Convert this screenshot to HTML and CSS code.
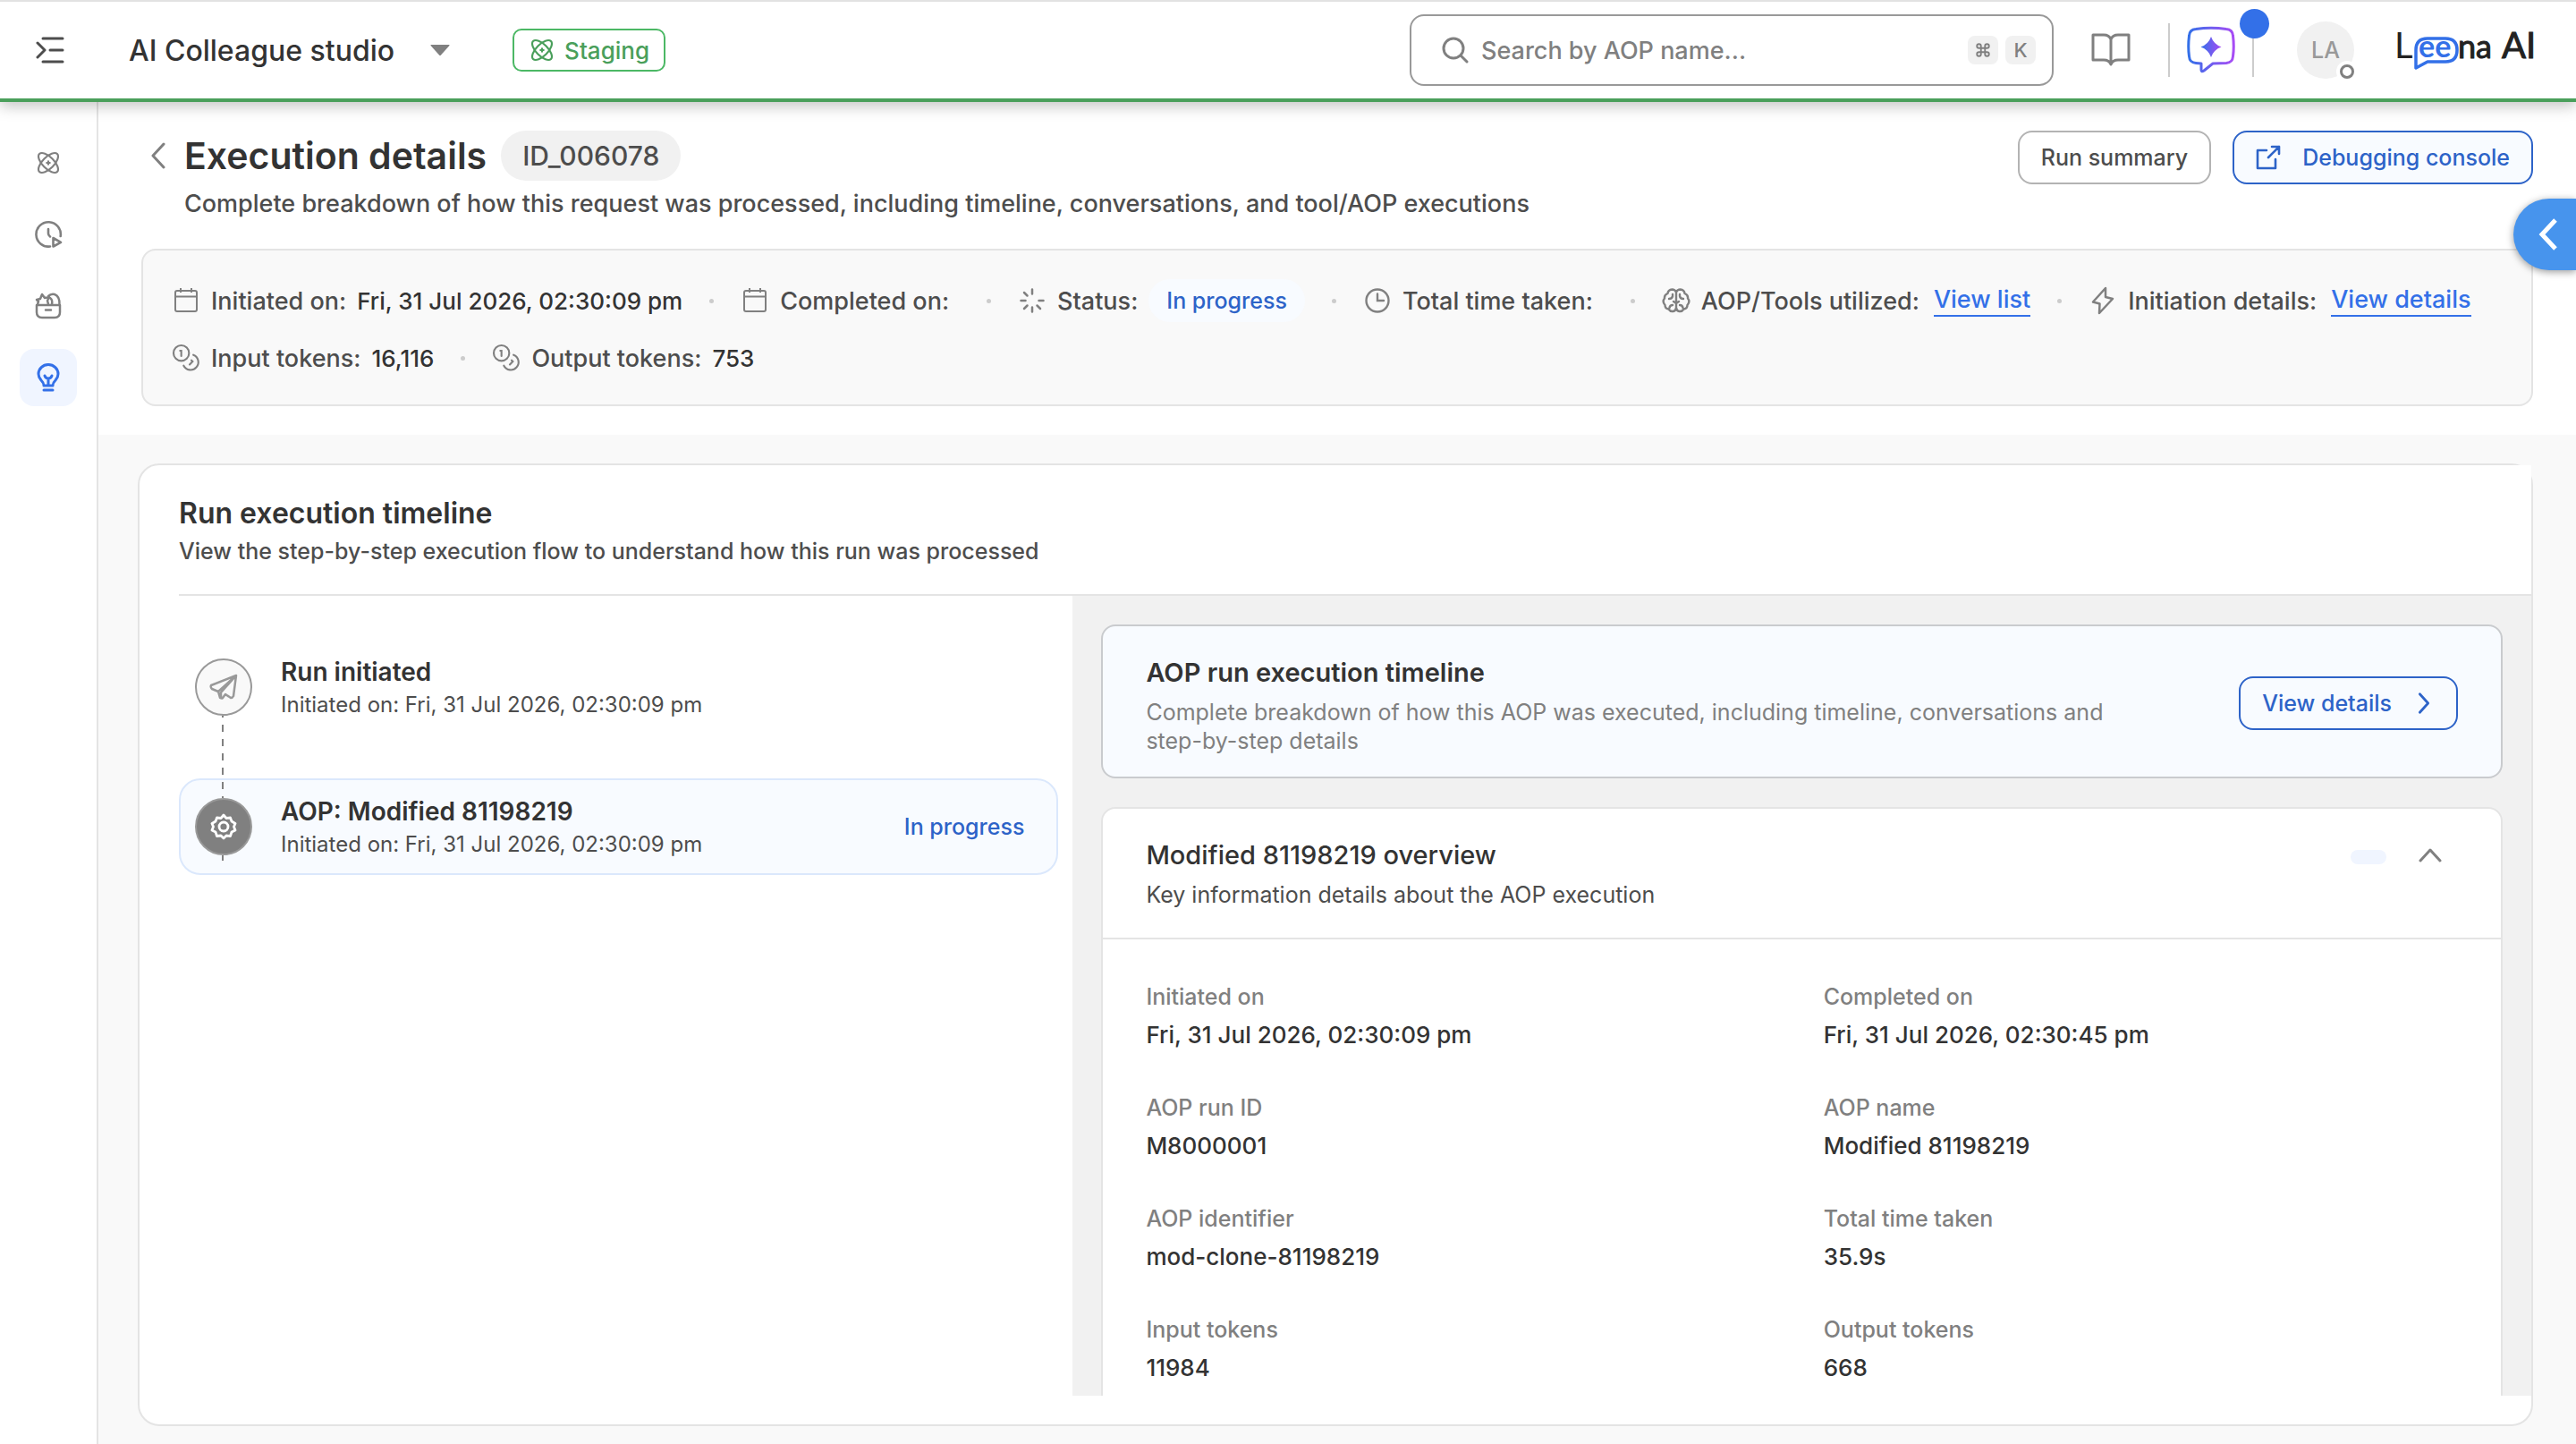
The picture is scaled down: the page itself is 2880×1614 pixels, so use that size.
FILE: index.html
```html
<!DOCTYPE html>
<html lang="en">
<head>
<meta charset="utf-8">
<meta name="viewport" content="width=device-width, initial-scale=1">
<title>Execution details - AI Colleague studio</title>
<link rel="stylesheet" href="styles.css">
</head>
<body>
<svg class="sprite" aria-hidden="true">
  <symbol id="i-atom" viewBox="0 0 24 24"><g fill="none" stroke="currentColor" stroke-width="2" stroke-linecap="round"><ellipse cx="12" cy="12" rx="13" ry="6" transform="rotate(45 12 12)"/><ellipse cx="12" cy="12" rx="13" ry="6" transform="rotate(-45 12 12)"/><path d="M12 10.4v3.2M10.4 12h3.2"/></g></symbol>
  <symbol id="i-calendar" viewBox="0 0 28 28"><g fill="none" stroke="currentColor" stroke-width="2"><rect x="2" y="3" width="24" height="23" rx="2"/><path d="M2 9.500h24M8 0v5M20 0v5"/></g></symbol>
  <symbol id="i-coins" viewBox="0 0 24 24"><g fill="none" stroke="currentColor" stroke-width="1.600" stroke-linecap="round"><circle cx="8" cy="8" r="6.500"/><path d="M18.100 9.500A6.500 6.500 0 1 1 10 18.500M7 6h1v4.500M16.500 14l1 1-2.500 2.600"/></g></symbol>
  <symbol id="i-right" viewBox="0 0 16 28"><path d="M3 3l10 11L3 25" fill="none" stroke="currentColor" stroke-width="3" stroke-linecap="round" stroke-linejoin="round"/></symbol>
</svg>
<div class="app">
  <header class="topbar">
    <button class="icon-btn" aria-label="Expand menu"><svg width="32" height="32" viewBox="0 0 32 32" fill="none" stroke="#4d4d4d" stroke-width="3" stroke-linecap="round" stroke-linejoin="round"><path d="M8 3h22M16 16h14M8 29h22M2 8l8 8-8 8"/></svg></button>
    <button class="product">AI Colleague studio<svg width="22" height="12" viewBox="0 0 22 12"><path d="M1 0h20q1 0 .4 1L12 11.500q-1 1-2 0L.6 1Q0 0 1 0z" fill="#808080"/></svg></button>
    <span class="env"><svg width="26" height="26"><use href="#i-atom"/></svg>Staging</span>
    <label class="search">
      <svg width="30" height="30" viewBox="0 0 30 30" fill="none" stroke="#808080" stroke-width="3" stroke-linecap="round"><circle cx="13" cy="13" r="11"/><path d="M21 21l7 7"/></svg>
      <input type="text" placeholder="Search by AOP name..." aria-label="Search by AOP name">
      <kbd><svg width="18" height="18" viewBox="0 0 24 24" fill="none" stroke="#808080" stroke-width="2.500"><path d="M15 6v12a3 3 0 1 0 3-3H6a3 3 0 1 0 3 3V6a3 3 0 1 0-3 3h12a3 3 0 1 0-3-3"/></svg></kbd><kbd>K</kbd>
    </label>
    <button class="icon-btn book" aria-label="Documentation"><svg width="44" height="38" viewBox="0 0 44 38" fill="none" stroke="#808080" stroke-width="3" stroke-linejoin="round"><path d="M22 7Q20 2 14 2H2v28h12q6 0 8 5 2-5 8-5h12V2H30q-6 0-8 5zv28"/></svg></button>
    <span class="rule"></span>
    <button class="icon-btn chat" aria-label="Assistant">
      <svg width="56" height="54" viewBox="0 0 56 54"><defs><linearGradient id="g"><stop offset="0" stop-color="#3370e8"/><stop offset="1" stop-color="#a84cf5"/></linearGradient></defs><path d="M11 3.500Q28 1 45 3.500 52 4 52.500 11 54 23 52.500 34 52 41 45 41.500L30 42 20 50q-3 2-3-1v-7l-6-.5Q4 41 3.500 34 2 23 3.500 11 4 4 11 3.500z" fill="none" stroke="url(#g)" stroke-width="3" stroke-linejoin="round"/><path d="M28 12q3 8.500 11.500 11.500Q31 26.500 28 35q-3-8.500-11.500-11.500Q25 20.500 28 12z" fill="url(#g)"/></svg>
    </button>
    <span class="rule notify"></span>
    <button class="avatar" aria-label="Account">LA</button>
    <svg class="logo" width="160" height="80" viewBox="-4 -15 160 80" role="img" aria-label="Leena AI">
      <text x="-3" y="34" font-size="40" fill="#222">L</text>
      <path d="M21 45V25q0-13 13-13h20q13 0 13 13t-13 13H34z" fill="#fff" stroke="#3370e8" stroke-width="3.500" stroke-linejoin="round"/>
      <text x="24" y="33" font-size="34" font-weight="700" fill="#3370e8">ee</text>
      <text x="68" y="34" font-size="36" fill="#222" stroke="#222">na</text>
      <text x="117" y="34" font-size="40" fill="#222" stroke="#222">AI</text>
    </svg>
  </header>
  <div class="body">
    <nav class="side" aria-label="Main">
      <a href="#" aria-label="Colleagues"><svg width="26" height="26"><use href="#i-atom"/></svg></a>
      <a href="#" aria-label="Runs"><svg width="32" height="32" viewBox="0 0 32 32" fill="none" stroke="currentColor" stroke-width="2.600" stroke-linecap="round" stroke-linejoin="round"><path d="M18 29.500A13.700 13.700 0 1 1 29.700 18M16 10v5q0 2 2 3.500M21.500 20v9.500l8.500-4.700z"/></svg></a>
      <a href="#" aria-label="Library"><svg width="30" height="30" viewBox="0 0 30 30" fill="none" stroke="currentColor" stroke-width="2.500" stroke-linecap="round" stroke-linejoin="round"><path d="M2 14h26v8q0 6-6 6H8q-6 0-6-6zM12 19.500h6M3 13l1-3-2-2 4-1 2-5 3 4 5-1-2 4 1 4M15 4q3-3 7-2 6 2 5.500 12M17 6q3 2 2 7"/></svg></a>
      <a href="#" class="on" aria-label="Insights" aria-current="page"><svg width="26" height="32" viewBox="0 0 26 32" fill="none" stroke="currentColor" stroke-width="3" stroke-linecap="round" stroke-linejoin="round"><path d="M8 25q0-3-3-6-3-3.500-3-7a11 10.500 0 0 1 22 0q0 3.500-3 7-3 3-3 6zM13 24v-7M9 14q1 3 4 3t4-3M8 30h10"/></svg></a>
    </nav>
    <main class="main">
      <section class="head">
        <div class="head-row">
          <button class="back" aria-label="Back"><svg width="18" height="30" viewBox="0 0 18 30"><path d="M15 2L3 15l12 13" fill="none" stroke="#808080" stroke-width="3" stroke-linecap="round" stroke-linejoin="round"/></svg></button>
          <div class="titles">
            <div class="title-line"><h1>Execution details</h1><span class="id">ID_006078</span></div>
            <p>Complete breakdown of how this request was processed, including timeline, conversations, and tool/AOP executions</p>
          </div>
          <button class="btn">Run summary</button>
          <button class="btn blue"><svg width="28" height="28" viewBox="0 0 28 28" fill="none" stroke="currentColor" stroke-width="2.600" stroke-linecap="round" stroke-linejoin="round"><path d="M12 6H2v20h20V16M18 2h8v8M26 2L14 14"/></svg>Debugging console</button>
        </div>
        <div class="facts">
          <ul>
            <li><svg width="28" height="28"><use href="#i-calendar"/></svg>Initiated on: <b>Fri, 31 Jul 2026, 02:30:09 pm</b></li>
            <li><svg width="28" height="28"><use href="#i-calendar"/></svg>Completed on: <b></b></li>
            <li><svg width="28" height="28" viewBox="0 0 28 28" stroke="currentColor" stroke-width="2.500" stroke-linecap="round"><path d="M14 1.500v5M14 21.500v5M1.500 14h5M21.500 14h5M5 5l3.500 3.500M19.500 19.500L23 23M5 23l3.500-3.500"/></svg>Status: <b class="status">In progress</b></li>
            <li><svg width="28" height="28" viewBox="0 0 28 28" fill="none" stroke="currentColor" stroke-width="2.400" stroke-linecap="round"><circle cx="14" cy="14" r="12.500"/><path d="M14 6.500V14h7"/></svg>Total time taken: <b></b></li>
            <li><svg width="32" height="28" viewBox="0 0 32 28" fill="none" stroke="currentColor" stroke-width="2.400" stroke-linecap="round" stroke-linejoin="round"><path d="M16 4.500Q14.500 1.500 11.500 1.500 7 2 6.500 6 2.500 7.500 3 11.500q-3 3.500.5 7.500 0 4 4 4.500 2 3 5 2.500 3-.5 3.500-4zM16 4.500q1.500-3 4.500-3 4.500.5 5 4.500 4 1.500 3.500 5.500 3 3.500-.5 7.500 0 4-4 4.500-2 3-5 2.500-3-.5-3.500-4M12 7v2q-.5 3-4 3M20 7v2q.5 3 4 3M12 19q-3 0-3.500 3M20 19q3 0 3.500 3M13 15l3 2 3-2"/></svg>AOP/Tools utilized: <a href="#">View list</a></li>
            <li><svg width="26" height="32" viewBox="0 0 26 32" fill="none" stroke="currentColor" stroke-width="2.500" stroke-linejoin="round"><path d="M16 2L2 17.500l7.500 2L9 30l15-16-8-2z"/></svg>Initiation details: <a href="#">View details</a></li>
          </ul>
          <ul>
            <li><svg width="32" height="32"><use href="#i-coins"/></svg>Input tokens: <b>16,116</b></li>
            <li><svg width="32" height="32"><use href="#i-coins"/></svg>Output tokens: <b>753</b></li>
          </ul>
        </div>
      </section>
      <section class="stage">
        <div class="run">
          <div class="run-head"><h2>Run execution timeline</h2><p>View the step-by-step execution flow to understand how this run was processed</p></div>
          <div class="run-body">
            <ol class="steps">
              <li>
                <span class="node"><svg width="32" height="32" viewBox="0 0 32 32" fill="none" stroke="#999" stroke-width="2.500" stroke-linejoin="round" stroke-linecap="round"><path d="M30 3L2 14q-1 2 1 4l7 3 2 7q2 1 3 0l3-4 6 4q2 0 3-2zM10 21L30 3 13 22v6"/></svg></span>
                <div class="step-text"><h3>Run initiated</h3><p>Initiated on: Fri, 31 Jul 2026, 02:30:09 pm</p></div>
              </li>
              <li class="active">
                <span class="node"><svg width="30" height="30" viewBox="0 0 30 30" fill="none" stroke="#fff" stroke-width="2.800" stroke-linejoin="round"><path d="M15 2l3 3.500 4.500-.5 1.500 4 4 2.500-1.500 3.500 1.500 4-4 2-1.500 4.500-4.500-.5L15 28l-3-3-4.500.5L6 21l-4-2 1.500-4L2 11.500 6 9l1.500-4 4.500.5z"/><circle cx="15" cy="15" r="5"/></svg></span>
                <div class="step-text"><h3>AOP: Modified 81198219</h3><p>Initiated on: Fri, 31 Jul 2026, 02:30:09 pm</p></div>
                <span class="state">In progress</span>
              </li>
            </ol>
            <div class="detail">
              <article class="promo">
                <div><h3>AOP run execution timeline</h3><p>Complete breakdown of how this AOP was executed, including timeline, conversations and step-by-step details</p></div>
                <button class="btn blue">View details<svg width="24" height="26"><use href="#i-right"/></svg></button>
              </article>
              <article class="overview">
                <header>
                  <div><h3>Modified 81198219 overview</h3><p>Key information details about the AOP execution</p></div>
                  <span class="chip"></span>
                  <button class="icon-btn" aria-label="Collapse"><svg width="26" height="16" viewBox="0 0 26 16"><path d="M2 14L13 2l11 12" fill="none" stroke="#808080" stroke-width="3" stroke-linecap="round" stroke-linejoin="round"/></svg></button>
                </header>
                <dl>
                  <div><dt>Initiated on</dt><dd>Fri, 31 Jul 2026, 02:30:09 pm</dd></div>
                  <div><dt>Completed on</dt><dd>Fri, 31 Jul 2026, 02:30:45 pm</dd></div>
                  <div><dt>AOP run ID</dt><dd>M8000001</dd></div>
                  <div><dt>AOP name</dt><dd>Modified 81198219</dd></div>
                  <div><dt>AOP identifier</dt><dd>mod-clone-81198219</dd></div>
                  <div><dt>Total time taken</dt><dd>35.9s</dd></div>
                  <div><dt>Input tokens</dt><dd>11984</dd></div>
                  <div><dt>Output tokens</dt><dd>668</dd></div>
                </dl>
              </article>
            </div>
          </div>
        </div>
      </section>
    </main>
  </div>
  <button class="drawer" aria-label="Open panel"><svg width="24" height="36" viewBox="0 0 24 36"><path d="M20 2L5 18l15 16" fill="none" stroke="#fff" stroke-width="5"/></svg></button>
</div>
</body>
</html>
```
FILE: styles.css
```css
*, *::before, *::after { box-sizing: border-box; margin: 0; padding: 0; }
body { font-family: "Inter", "Liberation Sans", sans-serif; font-size: 26px; font-weight: 500; color: #333; background: #fff; }
button, input { font: inherit; color: inherit; background: none; border: 0; }
button { cursor: pointer; }
ul, ol { list-style: none; }
svg { flex: none; display: block; }
.sprite { position: absolute; width: 0; height: 0; }
.sprite symbol, .side svg, .env svg, .logo { overflow: visible; }

.app { height: 100vh; display: flex; flex-direction: column; }

.topbar { position: relative; z-index: 2; display: flex; align-items: center; height: 114px; padding: 0 44px 0 40px; background: #fff; border-top: 2px solid #e2e2e2; border-bottom: 4px solid #4a9f5b; box-shadow: 0 4px 16px rgba(0, 0, 0, .25); }
.icon-btn { display: flex; align-items: center; justify-content: center; }
.product { display: flex; align-items: center; gap: 40px; margin-left: 72px; font-size: 32px; }
.env { display: flex; align-items: center; gap: 12px; height: 48px; margin-left: 70px; padding: 0 16px 0 18px; border: 2px solid #4cb865; border-radius: 10px; color: #4a9f5b; }
.search { display: flex; align-items: center; width: 25vw; height: 80px; margin-left: auto; padding: 0 18px 0 34px; border: 2px solid #999; border-radius: 16px; font-size: 27px; }
.search input { flex: 1; min-width: 0; margin-left: 14px; outline: 0; }
.search input::placeholder { color: #808080; opacity: 1; }
.search kbd { display: flex; align-items: center; justify-content: center; width: 34px; height: 32px; margin-left: 8px; border-radius: 8px; background: #f1f1f1; color: #808080; font: 500 22px "Inter", sans-serif; }
.book { margin-left: 42px; }
.rule { width: 2px; height: 60px; margin-left: 42px; background: #ccc; }
.chat { margin-left: 18px; }
.notify { position: relative; margin-left: 18px; }
.notify::after { content: ""; position: absolute; left: -14px; top: -16px; width: 33px; height: 33px; border-radius: 50%; background: #3370e8; }
.avatar { position: relative; width: 64px; height: 64px; margin-left: 48px; border-radius: 50%; background: #f1f1f1; color: #999; font-size: 25px; }
.avatar::after { content: ""; position: absolute; right: 0; bottom: 0; width: 16px; height: 16px; border: 3px solid #808080; border-radius: 50%; background: #fff; box-shadow: 0 0 0 4px #fff; }
.logo { margin-left: 44px; font-family: "Lato", sans-serif; font-weight: 400; }

.body { flex: 1; display: flex; min-height: 0; }
.side { display: flex; flex-direction: column; align-items: center; gap: 16px; width: 110px; padding-top: 36px; border-right: 2px solid #e4e4e4; }
.side a { display: flex; align-items: center; justify-content: center; width: 64px; height: 64px; border-radius: 16px; color: #808080; }
.side .on { background: #f0f5ff; color: #3370e8; }
.main { flex: 1; min-width: 0; display: flex; flex-direction: column; }

.head { padding: 32px 48px; }
.head-row { display: flex; align-items: flex-start; gap: 24px; }
.back { display: flex; align-items: center; height: 56px; margin: 0 -4px 0 10px; }
.titles { flex: 1; }
.title-line { display: flex; align-items: center; gap: 16px; height: 56px; }
h1 { font-size: 41px; font-weight: 600; line-height: 56px; }
.id { height: 56px; padding: 0 24px; border-radius: 28px; background: #f1f1f1; color: #4d4d4d; font-size: 30px; line-height: 56px; }
.titles p { margin-top: 6px; color: #4d4d4d; font-size: 27px; line-height: 40px; }
.btn { flex: none; display: flex; align-items: center; gap: 24px; height: 60px; padding: 0 24px; border: 2px solid #b3b3b3; border-radius: 16px; color: #4d4d4d; font-size: 25px; }
.btn.blue { border-color: #2d63c8; background: #f8fbff; color: #2d63c8; }

.facts { display: flex; flex-direction: column; gap: 16px; margin-top: 30px; padding: 32px 32px 28px; border: 2px solid #e4e4e4; border-radius: 16px; background: #f9f9f9; }
.facts ul { display: flex; align-items: center; height: 48px; }
.facts li { display: flex; align-items: center; gap: 12px; color: #4d4d4d; font-size: 27px; white-space: nowrap; }
.facts li + li::before { content: ""; width: 5px; height: 5px; margin: 0 18px 0 30px; border-radius: 50%; background: #ccc; }
.facts svg { width: 32px; color: #808080; }
.facts b { color: #333; font-size: 26px; font-weight: 500; }
.facts .status { padding: 0 20px; border-radius: 24px; background: #f8fbff; color: #2d63c8; font-size: 25px; line-height: 48px; }
.facts a { margin-left: 4px; border-bottom: 2px solid #3370e8; color: #3370e8; text-decoration: none; line-height: 34px; }

.stage { flex: 1; min-height: 0; display: flex; padding: 32px 48px 20px 44px; background: #f9f9f9; }
.run { flex: 1; display: flex; flex-direction: column; min-width: 0; padding: 0 0 32px 44px; border: 2px solid #e4e4e4; border-radius: 24px; background: #fff; }
.run-head { padding: 30px 0; border-bottom: 2px solid #e4e4e4; background: #fff; }
h2 { font-size: 32px; font-weight: 600; line-height: 48px; }
.run-head p { color: #4d4d4d; font-size: 25px; line-height: 36px; }
.run-body { flex: 1; min-height: 0; display: grid; grid-template-columns: 38fr 62fr; }

.steps { display: flex; flex-direction: column; gap: 48px; padding: 48px 16px 0 0; }
.steps li { display: flex; align-items: center; gap: 32px; height: 108px; padding: 0 36px 0 16px; border: 2px solid transparent; border-radius: 24px; }
.steps .active { border-color: #dbe8fc; background: #f8fbff; }
.node { position: relative; display: flex; align-items: center; justify-content: center; width: 64px; height: 64px; border: 2px solid #999; border-radius: 50%; background: #f9f9f9; }
.node::after { content: ""; position: absolute; left: 28px; top: 62px; width: 2px; height: 92px; background: repeating-linear-gradient(#808080 0 2px, transparent 2px 10px, #808080 10px 16px); }
.active .node { background: #808080; }
.active .node::after { height: 6px; background: #808080; }
.step-text { flex: 1; }
h3 { font-size: 28px; font-weight: 600; line-height: 40px; }
.step-text p { color: #4d4d4d; font-size: 24px; font-weight: 400; line-height: 34px; }
.state { color: #2d63c8; font-size: 25px; }

.detail { display: flex; flex-direction: column; gap: 32px; padding: 32px; background: #f1f1f1; overflow-y: auto; scrollbar-width: none; }
.promo { flex: none; display: flex; align-items: center; justify-content: space-between; padding: 28px 48px 24px; border: 2px solid #c9cbce; border-radius: 16px; background: #f8fbff; }
.promo h3, .overview h3 { font-size: 29px; line-height: 48px; }
.promo p { max-width: 1120px; margin-top: 4px; color: #808080; font-size: 25px; font-weight: 400; line-height: 32px; }
.overview { flex: none; border: 2px solid #e4e4e4; border-radius: 16px; background: #fff; }
.overview header { display: flex; align-items: flex-start; padding: 28px 66px 28px 48px; border-bottom: 2px solid #e4e4e4; }
.overview header div { flex: 1; }
.overview h3 { font-weight: 500; }
.overview header p { color: #4d4d4d; font-size: 25px; font-weight: 400; line-height: 40px; }
.overview .icon-btn { height: 48px; }
.chip { width: 40px; height: 16px; margin: 18px 36px 0 0; border-radius: 8px; background: #f0f5ff; }
dl { display: grid; grid-template-columns: 1fr 1fr; gap: 42px 48px; padding: 46px 48px 48px; }
dt { color: #808080; font-size: 25px; line-height: 36px; }
dd { margin-top: 4px; font-size: 26px; line-height: 42px; }

.drawer { position: fixed; z-index: 3; right: 0; top: 222px; display: flex; align-items: center; justify-content: center; width: 70px; height: 80px; padding-left: 8px; border-radius: 40px 0 0 40px; background: #4794ed; box-shadow: 0 2px 8px rgba(0, 0, 0, .4); }
```
